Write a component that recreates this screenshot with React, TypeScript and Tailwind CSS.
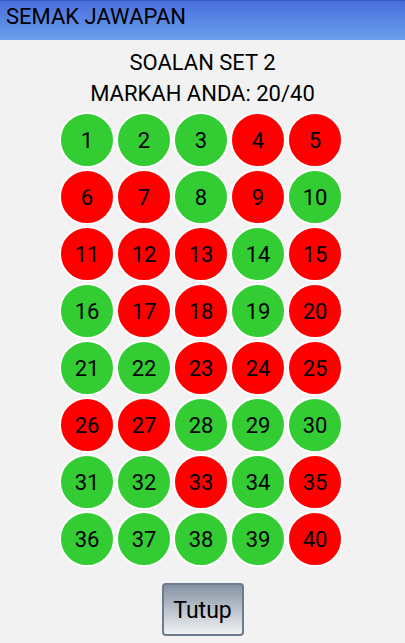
const RESULTS = "GGGRR RRGRG RRRGR GRRGR GGRRR RRGGG GGRGR GGGGR".replace(/ /g, "").split("");

export default function App() {
  return (
    <div className="flex h-[643px] w-[405px] flex-col bg-[#f2f2f2] font-['Roboto',sans-serif] text-black">
      <div className="h-10 border-t border-[#3a58c8] bg-gradient-to-b from-[#4a6ddd] to-[#6aa0ec] pl-[6px] text-[22px] leading-[32px]">
        SEMAK JAWAPAN
      </div>
      <div className="mt-[7px] text-center text-[22px] leading-[31px]">
        <p>SOALAN SET 2</p>
        <p>MARKAH ANDA: 20/40</p>
      </div>
      <div className="ml-[59px] mt-[3px] grid w-[284px] grid-cols-5 gap-px">
        {RESULTS.map((r, i) => (
          <div
            key={i}
            className={`flex h-[56px] w-[56px] items-center justify-center rounded-full border-2 border-white pt-px text-[22px] ${
              r === "G" ? "bg-[#33cc33]" : "bg-[#ff0000]"
            }`}
          >
            {i + 1}
          </div>
        ))}
      </div>
      <div className="mt-4 flex justify-center">
        <button className="h-[53px] w-[82px] rounded-[4px] border-2 border-[#6d7b8d] bg-gradient-to-b from-[#8593a4] to-[#f2f2f4] pt-[3px] text-[23px]">
          Tutup
        </button>
      </div>
    </div>
  );
}
